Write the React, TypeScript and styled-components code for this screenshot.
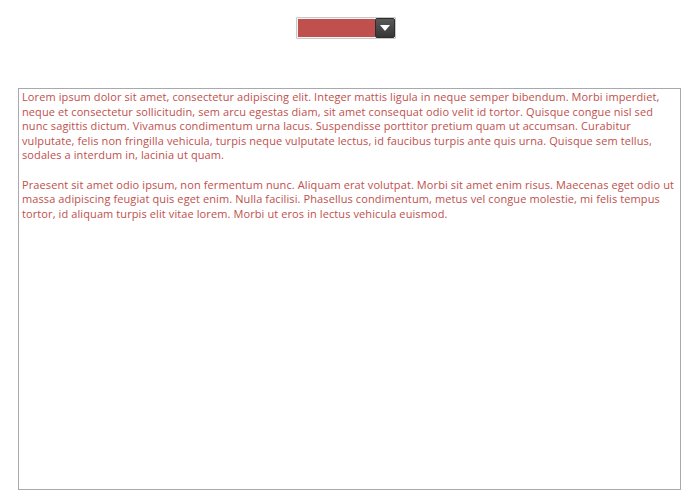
import React from "react";
import styled, { createGlobalStyle } from "styled-components";

const Global = createGlobalStyle`
  html, body { margin: 0; padding: 0; background: #ffffff; }
  body { font-family: "Open Sans", "Noto Sans", sans-serif; }
`;

const Page = styled.div`
  width: 700px;
  height: 500px;
  box-sizing: border-box;
  padding: 17px 19px 0 18px;
  display: flex;
  flex-direction: column;
`;

const Toolbar = styled.div`
  display: flex;
  justify-content: center;
  padding-right: 7px;
`;

const Picker = styled.div`
  display: flex;
  align-items: stretch;
  width: 100px;
  height: 22px;
  box-sizing: border-box;
  border: 1px solid #c8c8c8;
  background: #f4f4f4;
  padding: 1px;
  border-radius: 1px;
`;

const Swatch = styled.div<{ $color: string }>`
  flex: 1;
  background: ${(p) => p.$color};
`;

const Arrow = styled.div`
  width: 20px;
  display: flex;
  align-items: center;
  justify-content: center;
  background: linear-gradient(#5a5a5a, #363636);
  border: 1px solid #2c2c2c;
  border-radius: 2px;
  box-sizing: border-box;
  margin: -1px -1px -1px 0;
`;

const Editor = styled.div`
  margin-top: 49px;
  height: 402px;
  box-sizing: border-box;
  border: 1px solid #a9a8ae;
  padding: 1px 1px 1px 3px;
  color: #c0504d;
  font-family: "Open Sans", "Noto Sans", sans-serif;
  font-size: 11px;
  letter-spacing: 0.1px;
  line-height: 14.6px;
`;

const Para = styled.p`
  margin: 0 0 14.6px 0;
`;

export default function App() {
  return (
    <>
      <Global />
      <Page>
        <Toolbar>
          <Picker>
            <Swatch $color="#c0504d" />
            <Arrow>
              <svg width="10" height="6" viewBox="0 0 10 6">
                <path d="M0 0 H10 L5 6 Z" fill="#ffffff" />
              </svg>
            </Arrow>
          </Picker>
        </Toolbar>
        <Editor>
          <Para>
            Lorem ipsum dolor sit amet, consectetur adipiscing elit. Integer mattis ligula in neque semper bibendum. Morbi imperdiet, neque et consectetur sollicitudin, sem arcu egestas diam, sit amet consequat odio velit id tortor. Quisque congue nisl sed nunc sagittis dictum. Vivamus condimentum urna lacus. Suspendisse porttitor pretium quam ut accumsan. Curabitur vulputate, felis non fringilla vehicula, turpis neque vulputate lectus, id faucibus turpis ante quis urna. Quisque sem tellus, sodales a interdum in, lacinia ut quam.
          </Para>
          <Para>
            Praesent sit amet odio ipsum, non fermentum nunc. Aliquam erat volutpat. Morbi sit amet enim risus. Maecenas eget odio ut massa adipiscing feugiat quis eget enim. Nulla facilisi. Phasellus condimentum, metus vel congue molestie, mi felis tempus tortor, id aliquam turpis elit vitae lorem. Morbi ut eros in lectus vehicula euismod.
          </Para>
        </Editor>
      </Page>
    </>
  );
}
